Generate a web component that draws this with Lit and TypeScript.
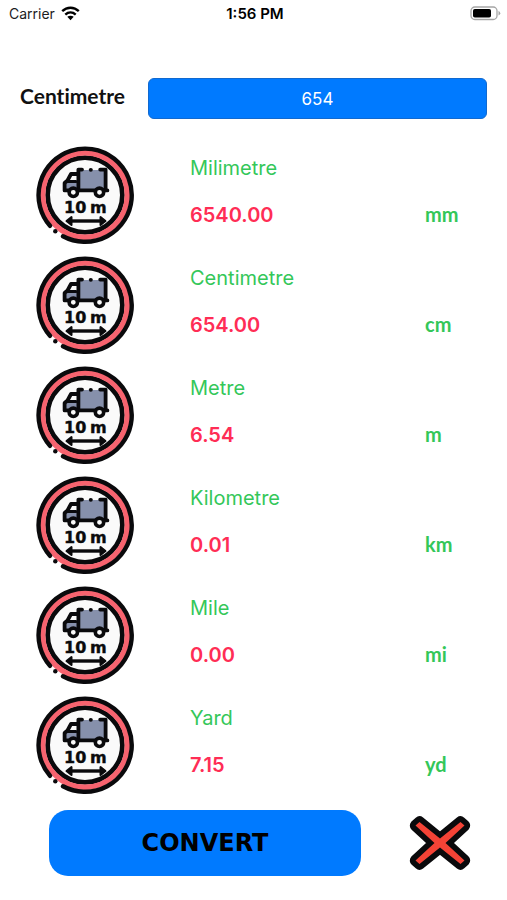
import { LitElement, html, css, svg } from "lit";
import { customElement, property, state } from "lit/decorators.js";

interface Unit {
  name: string;
  symbol: string;
  perCentimetre: number;
}

const UNITS: Unit[] = [
  { name: "Milimetre", symbol: "mm", perCentimetre: 10 },
  { name: "Centimetre", symbol: "cm", perCentimetre: 1 },
  { name: "Metre", symbol: "m", perCentimetre: 0.01 },
  { name: "Kilometre", symbol: "km", perCentimetre: 0.00001 },
  { name: "Mile", symbol: "mi", perCentimetre: 0.0000062137 },
  { name: "Yard", symbol: "yd", perCentimetre: 0.0109361 },
];

const truck = svg`
  <g fill="none" stroke="#0a0a0c" stroke-width="3.800" stroke-linecap="round" stroke-linejoin="round">
    <path d="M43 24H69V44H43Z" fill="#8690ab" stroke="none"/>
    <path d="M29.500 36H42V43H29.500Z" fill="#8690ab" stroke="none"/>
    <path d="M46 23.600H42.400V44M64.200 23.600H69.600V44"/>
    <path d="M54.700 23.800H54.900"/>
    <path d="M42 28H35L31.500 34.500L28.600 37V44.400H71.400"/>
    <path d="M32 35.500H40" stroke-width="3"/>
    <circle cx="37.300" cy="46.300" r="4.200" fill="#fafafa" stroke-width="3.600"/>
    <circle cx="63.500" cy="46.300" r="4.200" fill="#fafafa" stroke-width="3.600"/>
  </g>`;

@customElement("length-sign")
export class LengthSign extends LitElement {
  static styles = css`
    :host { display: block; }
    .sign { display: block; width: 100%; height: auto; }
    .legend {
      font-family: "DejaVu Sans", sans-serif;
      font-size: 16px;
      font-weight: 700;
      fill: #0a0a0c;
      stroke: #0a0a0c;
      stroke-width: 0.4px;
    }
  `;

  render() {
    return html`
      <svg class="sign" viewBox="0 0 98 98" role="img" aria-label="10 m length sign">
        <circle cx="49" cy="49" r="37.400" fill="#fafafa" stroke="#0a0a0c" stroke-width="4.800" />
        <circle cx="49" cy="49" r="42.300" fill="none" stroke="#f7636f" stroke-width="5.400" />
        <path d="M14 79.800A46.600 46.600 0 1 1 27 90.200" fill="none" stroke="#0a0a0c"
          stroke-width="4.400" stroke-linecap="round" />
        <circle cx="19.300" cy="85.300" r="2.200" fill="#0a0a0c" />
        ${truck}
        <text class="legend" x="28" y="67">10</text>
        <text class="legend" x="54" y="67">m</text>
        <path d="M34 75H66" stroke="#0a0a0c" stroke-width="3.400" />
        <path d="M35.500 71V79L30.500 75ZM64.500 71V79L69.500 75Z" fill="#0a0a0c"
          stroke="#0a0a0c" stroke-width="2" stroke-linejoin="round" />
      </svg>
    `;
  }
}

@customElement("status-bar")
export class StatusBar extends LitElement {
  static styles = css`
    :host {
      display: grid;
      grid-template-columns: 1fr auto 1fr;
      align-items: center;
      height: 27px;
      padding: 0 6px 0 9px;
      font-size: 14px;
      color: #1c1c1e;
    }
    .carrier { display: flex; align-items: center; gap: 6px; }
    .time { font-size: 15px; font-weight: 600; color: #000; }
    .battery { justify-self: end; display: block; }
  `;

  render() {
    return html`
      <span class="carrier">
        Carrier
        <svg width="19" height="15" viewBox="0 0 19 15" aria-hidden="true">
          <g fill="none" stroke="#000" stroke-width="2.400">
            <path d="M1.200 5.200C6 .6 13 .6 17.800 5.200" />
            <path d="M4.300 8.600C7.400 5.800 11.600 5.800 14.700 8.600" />
          </g>
          <path d="M6.300 10.800C8.200 9.300 10.800 9.300 12.700 10.800L9.500 14.200Z" />
        </svg>
      </span>
      <span class="time">1:56 PM</span>
      <svg class="battery" width="31" height="15" viewBox="0 0 31 15" role="img" aria-label="Battery">
        <rect x="1" y="1" width="26" height="12.500" rx="3.800" fill="#fff" stroke="#a6a6a6" stroke-width="1.300" />
        <rect x="3" y="3" width="18" height="8.500" rx="1.800" />
        <path d="M28.500 4.800Q32 7.200 28.500 9.600Z" fill="#a6a6a6" />
      </svg>
    `;
  }
}

@customElement("unit-row")
export class UnitRow extends LitElement {
  @property({ attribute: false }) unit: Unit = UNITS[0];
  @property({ type: Number }) amount = 0;

  static styles = css`
    :host {
      display: grid;
      grid-template-columns: 98px 1fr;
      column-gap: 56px;
      align-items: center;
      height: 110px;
    }
    .reading {
      display: grid;
      grid-template-columns: 1fr 46px;
      row-gap: 17px;
      align-items: baseline;
      padding-bottom: 8px;
      font-size: 20px;
      line-height: 30px;
    }
    .name { grid-column: 1 / 3; color: #34c759; }
    .value { color: #ff2d55; font-weight: 600; }
    .symbol {
      color: #34c759;
      font-family: Lato, sans-serif;
      font-weight: 700;
      line-height: 24px;
    }
  `;

  render() {
    return html`
      <length-sign></length-sign>
      <div class="reading">
        <span class="name">${this.unit.name}</span>
        <span class="value">${(this.amount * this.unit.perCentimetre).toFixed(2)}</span>
        <span class="symbol">${this.unit.symbol}</span>
      </div>
    `;
  }
}

@customElement("app-root")
export class AppRoot extends LitElement {
  @state() private entry = "654";
  @state() private amount = 654;

  static styles = css`
    :host {
      display: block;
      min-height: 100vh;
      background: #fff;
      font-family: Inter, sans-serif;
    }
    .entry {
      display: flex;
      align-items: center;
      margin: 51px 20px 21px;
    }
    .entry-label {
      flex: none;
      width: 128px;
      padding-bottom: 6px;
      box-sizing: border-box;
      font: 700 21px/30px Lato, sans-serif;
      font-variant-ligatures: none;
      color: #111;
    }
    .entry-field {
      flex: 1;
      min-width: 0;
      height: 41px;
      box-sizing: border-box;
      padding: 0;
      border: 1px solid #1169cf;
      border-radius: 6px;
      background: #007aff;
      color: #fff;
      font: 400 17px/24px Inter, sans-serif;
      text-align: center;
    }
    .units { padding: 0 36px; }
    .actions {
      display: flex;
      align-items: center;
      gap: 48px;
      padding: 10px 36px 24px 49px;
    }
    .convert {
      flex: 1;
      height: 66px;
      padding: 0;
      border: 0;
      border-radius: 19px;
      background: #007aff;
      color: #000;
      font: 700 24px/32px "DejaVu Sans", sans-serif;
    }
    .clear {
      width: 62px;
      height: 62px;
      padding: 0;
      border: 0;
      background: none;
    }
    .cross { display: block; width: 100%; overflow: visible; }
  `;

  private onInput(event: Event) {
    this.entry = (event.target as HTMLInputElement).value;
  }

  private convert() {
    this.amount = Number(this.entry) || 0;
  }

  private clear() {
    this.entry = "";
    this.amount = 0;
  }

  render() {
    return html`
      <status-bar></status-bar>
      <div class="entry">
        <label class="entry-label" for="length">Centimetre</label>
        <input class="entry-field" id="length" inputmode="decimal" .value=${this.entry} @input=${this.onInput} />
      </div>
      <div class="units">
        ${UNITS.map((unit) => html`<unit-row .unit=${unit} .amount=${this.amount}></unit-row>`)}
      </div>
      <div class="actions">
        <button class="convert" @click=${this.convert}>CONVERT</button>
        <button class="clear" aria-label="Clear" @click=${this.clear}>
          <svg class="cross" viewBox="0 0 62 54" aria-hidden="true">
            <path
              d="M6.500 9.500L10.500 6L31 22.600L51.500 6L55.500 9.500L36.500 27L55.500 44.500L51.500 48L31 31.500L10.500 48L6.500 44.500L25.500 27Z"
              fill="#f44336" stroke="#0a0a0c" stroke-width="11.400" stroke-linejoin="round" paint-order="stroke" />
          </svg>
        </button>
      </div>
    `;
  }
}
